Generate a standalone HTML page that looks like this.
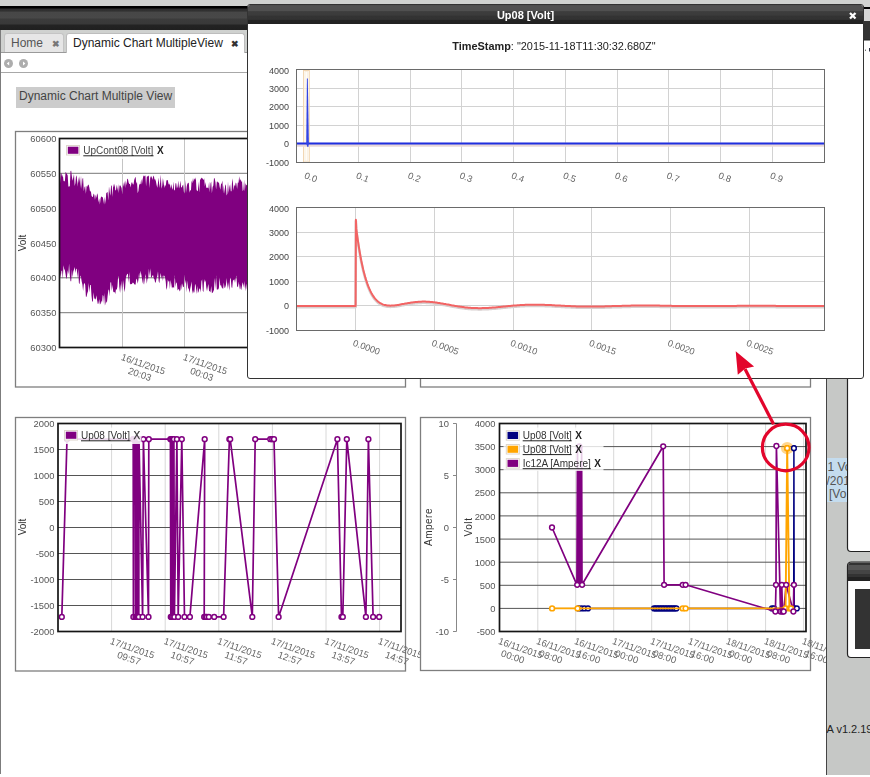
<!DOCTYPE html>
<html><head><meta charset="utf-8"><title>Dynamic Chart MultipleView</title>
<style>
html,body{margin:0;padding:0;background:#fff;}
body{width:870px;height:777px;overflow:hidden;position:relative;font-family:"Liberation Sans",sans-serif;}
.abs{position:absolute;}
#topstrip{left:0;top:0;width:870px;height:7px;background:#d0d2d0;}
#hdr{left:0;top:6px;width:870px;height:24px;background:linear-gradient(#000 0,#000 2.2px,#2e2e2e 2.8px,#323232 5.2px,#474747 6px,#484848 12px,#3b3b3b 13px,#393939 18px,#232323 19px,#202020 24px);}
#tabbar{left:0;top:30px;width:826px;height:22px;background:#cfd1cf;border-bottom:1px solid #9a9a9a;}
.tab{position:absolute;top:3px;height:19px;font-size:12px;line-height:18px;color:#555;background:#e6e6e6;border:1px solid #c4c4c4;border-bottom:none;border-radius:3px 3px 0 0;box-sizing:border-box;white-space:nowrap;}
.tab.active{background:#fff;color:#222;height:21px;border-color:#bdbdbd;}
.tabx{position:absolute;font-size:8.5px;font-weight:bold;color:#777;}
#toolbar{left:0;top:53px;width:826px;height:19px;background:#fff;border-bottom:1px solid #a8a8a8;}
#title{left:16px;top:87px;width:159px;height:20.5px;background:#ccc;font-size:12px;line-height:18px;color:#444;text-indent:3px;white-space:nowrap;}
#leftedge{left:0;top:30px;width:1.3px;height:744px;background:#7c7c7c;}
#rightgray{left:825.6px;top:30px;width:44.4px;height:745.4px;background:#c6c8c6;border-left:1.5px solid #444;box-sizing:border-box;}
#popup{will-change:transform;left:247px;top:4px;width:617px;height:375px;background:#fff;border:1px solid #333;border-radius:3px;box-sizing:border-box;overflow:hidden;}
#pophdr{left:0;top:0;width:618px;height:19px;background:linear-gradient(#4c4c4c 0,#515151 1px,#505050 5.8px,#3d3d3d 6.6px,#3b3b3b 10.2px,#333 11px,#323232 14.4px,#232323 15.2px,#212121 19px);}
#poptitle{left:0;top:0;width:555px;height:19px;line-height:21.5px;text-align:center;color:#fff;font-weight:bold;font-size:11px;}
#popts{left:0;top:35px;width:612px;text-align:center;font-size:10.9px;color:#222;white-space:nowrap;}
svg{position:absolute;left:0;top:0;}
.gs{will-change:transform;}
</style></head><body>
<div class="abs" id="topstrip"></div>
<div class="abs" id="hdr"></div>
<div class="abs" id="tabbar">
 <div class="tab" style="left:4px;width:60px;"><span style="position:absolute;left:6px;">Home</span><span class="tabx" style="left:46.5px;top:0.5px;">&#10006;</span></div>
 <div class="tab active" style="left:66px;width:179px;"><span style="position:absolute;left:6px;">Dynamic Chart MultipleView</span><span class="tabx" style="left:163.5px;top:0.5px;color:#333;">&#10006;</span></div>
</div>
<div class="abs" id="toolbar"></div>
<div class="abs" id="leftedge"></div>
<div class="abs" id="title">Dynamic Chart Multiple View</div>

<svg class="gs" width="870" height="777" viewBox="0 0 870 777" font-family="Liberation Sans, sans-serif">
<defs><clipPath id="clipmain"><rect x="0" y="0" width="826" height="777"/></clipPath></defs>
<circle cx="8.5" cy="63.5" r="4.5" fill="#adadad"/><path d="M9.2 61.6 L6.8 63.5 L9.2 65.4 Z" fill="#fff"/>
<circle cx="23.5" cy="63.5" r="4.5" fill="#adadad"/><path d="M23 61.6 L25.4 63.5 L23 65.4 Z" fill="#fff"/>
<rect x="15.5" y="131.5" width="390" height="255.5" fill="#fff" stroke="#7e7e7e" stroke-width="1.3"/><line x1="59.5" y1="138.5" x2="400" y2="138.5" stroke="#777" stroke-width="1"/><line x1="59.5" y1="173.3" x2="400" y2="173.3" stroke="#777" stroke-width="1"/><line x1="59.5" y1="208.2" x2="400" y2="208.2" stroke="#777" stroke-width="1"/><line x1="59.5" y1="243" x2="400" y2="243" stroke="#777" stroke-width="1"/><line x1="59.5" y1="277.8" x2="400" y2="277.8" stroke="#777" stroke-width="1"/><line x1="59.5" y1="312.7" x2="400" y2="312.7" stroke="#777" stroke-width="1"/><line x1="59.5" y1="347.5" x2="400" y2="347.5" stroke="#777" stroke-width="1"/><line x1="122.5" y1="138.5" x2="122.5" y2="347.5" stroke="#c4c4c4" stroke-width="1"/><line x1="184.5" y1="138.5" x2="184.5" y2="347.5" stroke="#c4c4c4" stroke-width="1"/><polygon points="60,183.3 60.7,173.8 61.4,172.9 62.1,177.2 62.8,174.4 63.5,180.7 64.2,181.5 64.9,180.7 65.6,171.8 66.3,173.1 67,173.9 67.7,175.4 68.4,186.8 69.1,186.3 69.8,186.6 70.5,170.9 71.2,170.8 71.9,176.6 72.6,180.8 73.3,177.4 74,174 74.7,186 75.4,182.9 76.1,175.2 76.8,176.9 77.5,186.8 78.2,177 78.9,182.9 79.6,175.9 80.3,188.1 81,175.4 81.7,189.1 82.4,179 83.1,177.7 83.8,191.3 84.5,186.9 85.2,186.3 85.9,193.8 86.6,186 87.3,186.8 88,184.7 88.7,184.7 89.4,187.8 90.1,192 90.8,190.6 91.5,195.5 92.2,196.9 92.9,196.7 93.6,193.4 94.3,194.7 95,200.1 95.7,194.4 96.4,198 97.1,193.3 97.8,194.9 98.5,202.6 99.2,198.4 99.9,204.5 100.6,198.3 101.3,196.2 102,197.2 102.7,197.1 103.4,200.3 104.1,204.6 104.8,196.8 105.5,204.1 106.2,193.3 106.9,192.5 107.6,191.9 108.3,200.5 109,186.2 109.7,192.1 110.4,195.7 111.1,184.9 111.8,186.3 112.5,197.1 113.2,183.8 113.9,187.6 114.6,183.5 115.3,190.5 116,190.1 116.7,184.4 117.4,190.7 118.1,184 118.8,193 119.5,185.8 120.2,185.2 120.9,186.5 121.6,188 122.3,194.4 123,182 123.7,186.7 124.4,181 125.1,188.1 125.8,180.3 126.5,185.5 127.2,178.9 127.9,178.8 128.6,182.5 129.3,183.9 130,184.1 130.7,187.4 131.4,182.7 132.1,182.3 132.8,184.3 133.5,184.6 134.2,180.1 134.9,178 135.6,176.8 136.3,183.8 137,181.8 137.7,193.3 138.4,190.9 139.1,185.2 139.8,183.7 140.5,184.2 141.2,179 141.9,184.4 142.6,179.6 143.3,176.3 144,175.3 144.7,176.6 145.4,175.3 146.1,186.2 146.8,176.8 147.5,176.6 148.2,175.4 148.9,176.2 149.6,187.9 150.3,176 151,178 151.7,175.8 152.4,180 153.1,176.8 153.8,175.6 154.5,179.4 155.2,179.2 155.9,181.2 156.6,185 157.3,187.8 158,182.7 158.7,177.6 159.4,188.1 160.1,182.7 160.8,174.4 161.5,188.8 162.2,185.7 162.9,178 163.6,182.4 164.3,187.9 165,184.6 165.7,186.6 166.4,180.6 167.1,180.1 167.8,180.2 168.5,183.7 169.2,185.1 169.9,183.2 170.6,188.8 171.3,184 172,188 172.7,189.7 173.4,181.6 174.1,190.1 174.8,190.5 175.5,183.3 176.2,183.3 176.9,188.4 177.6,186.4 178.3,180.5 179,188.8 179.7,186 180.4,180.4 181.1,187.5 181.8,187.3 182.5,185.5 183.2,184.5 183.9,191.8 184.6,193.4 185.3,179.7 186,193 186.7,186.4 187.4,183.4 188.1,183.2 188.8,182.4 189.5,192.8 190.2,189.8 190.9,190.9 191.6,180.5 192.3,183.3 193,178 193.7,181.7 194.4,178.3 195.1,179.7 195.8,177.3 196.5,189.6 197.2,191.3 197.9,190.6 198.6,181.5 199.3,192.4 200,180.1 200.7,178.9 201.4,177.4 202.1,178.7 202.8,178.2 203.5,180.2 204.2,178.2 204.9,186.6 205.6,182 206.3,188.1 207,187.4 207.7,187.8 208.4,188.4 209.1,181.5 209.8,192.2 210.5,183.6 211.2,181.6 211.9,193.2 212.6,187.1 213.3,185.6 214,177.9 214.7,178.4 215.4,182.1 216.1,189.6 216.8,181.8 217.5,181.4 218.2,183.1 218.9,182.1 219.6,186.6 220.3,189.8 221,184 221.7,183.4 222.4,180.6 223.1,193.6 223.8,185 224.5,193.7 225.2,184.3 225.9,185.8 226.6,195.4 227.3,193.7 228,181.4 228.7,193 229.4,187.1 230.1,184.2 230.8,191.3 231.5,191.2 232.2,178.2 232.9,182.7 233.6,190.4 234.3,184.6 235,186.4 235.7,182.4 236.4,183.6 237.1,189.1 237.8,182.6 238.5,182.8 239.2,176.3 239.9,180.8 240.6,179 241.3,182.2 242,180.2 242.7,191.3 243.4,189.8 244.1,179.7 244.8,191.5 245.5,183 246.2,185.5 246.9,184.5 247.6,188.4 248.3,182.4 249,179.4 249.7,184.6 249.7,288.1 249,285.4 248.3,291.5 247.6,278.3 246.9,289.8 246.2,283.6 245.5,291.5 244.8,281.1 244.1,288.1 243.4,285.1 242.7,282.3 242,285.4 241.3,290 240.6,288.7 239.9,283.7 239.2,289.8 238.5,281.5 237.8,287.2 237.1,286.6 236.4,275.6 235.7,278.6 235,282.9 234.3,279.2 233.6,280 232.9,280.8 232.2,288.1 231.5,287.2 230.8,279.1 230.1,277.4 229.4,290.7 228.7,286.1 228,281.9 227.3,289.3 226.6,277.7 225.9,285.1 225.2,287.5 224.5,287.9 223.8,282.5 223.1,289.3 222.4,288.1 221.7,287.5 221,284.9 220.3,285.8 219.6,277.2 218.9,288 218.2,289.5 217.5,289.6 216.8,289.4 216.1,275.3 215.4,289 214.7,277.7 214,289.8 213.3,291.4 212.6,292.7 211.9,293.3 211.2,286 210.5,292.6 209.8,291.1 209.1,291.5 208.4,284.1 207.7,287.2 207,291.2 206.3,287.5 205.6,280.2 204.9,282.4 204.2,279.1 203.5,291.9 202.8,291 202.1,279.2 201.4,281.4 200.7,292.4 200,288.6 199.3,288.7 198.6,291.7 197.9,292.9 197.2,286.1 196.5,294.3 195.8,285.7 195.1,283.8 194.4,292.3 193.7,292.7 193,290 192.3,294.1 191.6,281.4 190.9,285.4 190.2,288.7 189.5,293.1 188.8,289.1 188.1,288.1 187.4,280.6 186.7,292.4 186,279.9 185.3,283.8 184.6,274.5 183.9,286.8 183.2,287.3 182.5,283.3 181.8,289.9 181.1,283.6 180.4,290 179.7,291.6 179,289.2 178.3,289.2 177.6,290.5 176.9,283.6 176.2,282.2 175.5,287 174.8,274.9 174.1,287.9 173.4,287.2 172.7,287.1 172,288.4 171.3,284.1 170.6,280.1 169.9,289.3 169.2,281 168.5,281.8 167.8,279.4 167.1,287.5 166.4,290.1 165.7,281.6 165,277.2 164.3,275.8 163.6,275.4 162.9,281.1 162.2,275.4 161.5,278.9 160.8,273.1 160.1,276.8 159.4,283.2 158.7,281.2 158,271.3 157.3,276 156.6,278 155.9,281.8 155.2,283 154.5,279.5 153.8,278.4 153.1,275.3 152.4,275.4 151.7,277.3 151,277.7 150.3,268.3 149.6,276.8 148.9,268.6 148.2,278.6 147.5,278.5 146.8,283.7 146.1,277.4 145.4,274 144.7,284.7 144,276.3 143.3,284.4 142.6,282.3 141.9,277.9 141.2,274.1 140.5,270.7 139.8,278.6 139.1,272.6 138.4,280.1 137.7,283.7 137,279.7 136.3,278.6 135.6,284.5 134.9,284.7 134.2,283.9 133.5,282.9 132.8,282.5 132.1,283.8 131.4,284.3 130.7,283.7 130,284.8 129.3,272.1 128.6,282.8 127.9,273.8 127.2,274.1 126.5,275.4 125.8,278.3 125.1,288.3 124.4,292.3 123.7,284.4 123,280.1 122.3,291.3 121.6,280.5 120.9,293.2 120.2,284 119.5,292.6 118.8,276.8 118.1,276.8 117.4,286.8 116.7,289.9 116,289 115.3,293.9 114.6,292.1 113.9,292.3 113.2,291.6 112.5,284.8 111.8,290.9 111.1,282.2 110.4,282.4 109.7,296.6 109,289.3 108.3,290.4 107.6,295.9 106.9,303.1 106.2,301.3 105.5,305.6 104.8,293 104.1,305.7 103.4,296.1 102.7,295.1 102,303.1 101.3,300.6 100.6,303.7 99.9,304.6 99.2,298.9 98.5,303.4 97.8,304.1 97.1,299.9 96.4,295.2 95.7,299.7 95,298.5 94.3,298.7 93.6,292.2 92.9,301.2 92.2,301.7 91.5,295.8 90.8,285.1 90.1,284.9 89.4,292.5 88.7,283 88,291.3 87.3,293.3 86.6,296.7 85.9,296.7 85.2,285.1 84.5,282.8 83.8,284.5 83.1,291.1 82.4,284.5 81.7,281.6 81,277.1 80.3,275.4 79.6,284.2 78.9,283 78.2,269 77.5,278.3 76.8,269.2 76.1,268.4 75.4,272.9 74.7,266.9 74,269.5 73.3,271.4 72.6,277.4 71.9,269.6 71.2,281.3 70.5,281.3 69.8,274.9 69.1,263.4 68.4,274.2 67.7,270.2 67,276.7 66.3,279.2 65.6,274.2 64.9,270.3 64.2,269.1 63.5,265.3 62.8,279.1 62.1,270.6 61.4,270.9 60.7,278 60,272.8" fill="#800080"/><rect x="59.5" y="138.5" width="340.5" height="209" fill="none" stroke="#151515" stroke-width="1.7"/><text x="56.4" y="142.1" font-size="9.4" fill="#555" text-anchor="end">60600</text><text x="56.4" y="176.9" font-size="9.4" fill="#555" text-anchor="end">60550</text><text x="56.4" y="211.8" font-size="9.4" fill="#555" text-anchor="end">60500</text><text x="56.4" y="246.6" font-size="9.4" fill="#555" text-anchor="end">60450</text><text x="56.4" y="281.4" font-size="9.4" fill="#555" text-anchor="end">60400</text><text x="56.4" y="316.3" font-size="9.4" fill="#555" text-anchor="end">60350</text><text x="56.4" y="351.1" font-size="9.4" fill="#555" text-anchor="end">60300</text><text transform="translate(26,243) rotate(-90)" font-size="10" fill="#333" text-anchor="middle">Volt</text><rect x="62" y="142" width="110" height="17" fill="#fff" fill-opacity="0.85"/><rect x="66.5" y="145.5" width="13" height="9.5" fill="#fff" stroke="#ddd6cc" stroke-width="1"/><rect x="67.8" y="146.7" width="10.6" height="7.1" fill="#800080"/><text x="83.3" y="154.3" font-size="10" fill="#444">UpCont08 [Volt]</text><line x1="83.3" y1="155.8" x2="153.5" y2="155.8" stroke="#222" stroke-width="1"/><text x="157" y="154.3" font-size="10" font-weight="bold" fill="#222">X</text><g transform="translate(120.5,359.8) rotate(19)" font-size="9.6" fill="#666"><text x="0" y="0" textLength="46" lengthAdjust="spacingAndGlyphs">16/11/2015</text><text x="23" y="10.7" text-anchor="middle">20:03</text></g><g transform="translate(182.5,359.8) rotate(19)" font-size="9.6" fill="#666"><text x="0" y="0" textLength="46" lengthAdjust="spacingAndGlyphs">17/11/2015</text><text x="23" y="10.7" text-anchor="middle">00:03</text></g>
<rect x="420.5" y="131.5" width="390" height="255.5" fill="#fff" stroke="#7e7e7e" stroke-width="1.3"/>
<rect x="15.5" y="417.5" width="390" height="253.5" fill="#fff" stroke="#7e7e7e" stroke-width="1.3"/><line x1="111.6" y1="423.5" x2="111.6" y2="631.5" stroke="#d8d8d8" stroke-width="1"/><line x1="165.2" y1="423.5" x2="165.2" y2="631.5" stroke="#d8d8d8" stroke-width="1"/><line x1="218.8" y1="423.5" x2="218.8" y2="631.5" stroke="#d8d8d8" stroke-width="1"/><line x1="272.4" y1="423.5" x2="272.4" y2="631.5" stroke="#d8d8d8" stroke-width="1"/><line x1="326" y1="423.5" x2="326" y2="631.5" stroke="#d8d8d8" stroke-width="1"/><line x1="379.6" y1="423.5" x2="379.6" y2="631.5" stroke="#d8d8d8" stroke-width="1"/><line x1="58" y1="423.5" x2="401" y2="423.5" stroke="#555" stroke-width="1"/><line x1="58" y1="449.5" x2="401" y2="449.5" stroke="#555" stroke-width="1"/><line x1="58" y1="475.5" x2="401" y2="475.5" stroke="#555" stroke-width="1"/><line x1="58" y1="501.5" x2="401" y2="501.5" stroke="#555" stroke-width="1"/><line x1="58" y1="527.5" x2="401" y2="527.5" stroke="#555" stroke-width="1"/><line x1="58" y1="553.5" x2="401" y2="553.5" stroke="#555" stroke-width="1"/><line x1="58" y1="579.5" x2="401" y2="579.5" stroke="#555" stroke-width="1"/><line x1="58" y1="605.5" x2="401" y2="605.5" stroke="#555" stroke-width="1"/><line x1="58" y1="631.5" x2="401" y2="631.5" stroke="#555" stroke-width="1"/><polyline points="61.8,616.9 67,439.2 133.2,439.2 133.4,616.9 133.7,439.2 135.2,439.2 135.5,616.9 136.1,439.2 136.7,616.9 137.2,439.2 137.8,616.9 138.4,439.2 138.8,616.9 139,439.2 142.6,616.9 143.4,439.2 148.5,616.9 148.8,439.2 170.4,439.2 170.8,616.9 171.4,439.2 172.1,616.9 172.7,439.2 173.3,616.9 173.9,439.2 174.4,616.9 176.9,439.2 178.2,616.9 181.8,439.2 184.5,616.9 189.9,616.9 204.7,439.2 204.2,616.9 205.5,616.9 206.8,616.9 208.8,616.9 214.2,616.9 223.6,616.9 229.4,439.2 230.2,439.2 252.3,616.9 255.2,439.2 270.3,439.2 272.2,439.2 274,439.2 278.6,616.9 337.4,439.2 341.5,616.9 342.8,616.9 346.8,439.2 365.9,616.9 368.4,439.2 373.1,616.9 379.2,616.9" fill="none" stroke="#800080" stroke-width="1.7" stroke-linejoin="round" /><circle cx="61.8" cy="616.9" r="2.4" fill="#fff" stroke="#800080" stroke-width="1.5"/><circle cx="67" cy="439.2" r="2.4" fill="#fff" stroke="#800080" stroke-width="1.5"/><circle cx="133.2" cy="439.2" r="2.4" fill="#fff" stroke="#800080" stroke-width="1.5"/><circle cx="133.4" cy="616.9" r="2.4" fill="#fff" stroke="#800080" stroke-width="1.5"/><circle cx="133.7" cy="439.2" r="2.4" fill="#fff" stroke="#800080" stroke-width="1.5"/><circle cx="135.2" cy="439.2" r="2.4" fill="#fff" stroke="#800080" stroke-width="1.5"/><circle cx="135.5" cy="616.9" r="2.4" fill="#fff" stroke="#800080" stroke-width="1.5"/><circle cx="136.1" cy="439.2" r="2.4" fill="#fff" stroke="#800080" stroke-width="1.5"/><circle cx="136.7" cy="616.9" r="2.4" fill="#fff" stroke="#800080" stroke-width="1.5"/><circle cx="137.2" cy="439.2" r="2.4" fill="#fff" stroke="#800080" stroke-width="1.5"/><circle cx="137.8" cy="616.9" r="2.4" fill="#fff" stroke="#800080" stroke-width="1.5"/><circle cx="138.4" cy="439.2" r="2.4" fill="#fff" stroke="#800080" stroke-width="1.5"/><circle cx="138.8" cy="616.9" r="2.4" fill="#fff" stroke="#800080" stroke-width="1.5"/><circle cx="139" cy="439.2" r="2.4" fill="#fff" stroke="#800080" stroke-width="1.5"/><circle cx="142.6" cy="616.9" r="2.4" fill="#fff" stroke="#800080" stroke-width="1.5"/><circle cx="143.4" cy="439.2" r="2.4" fill="#fff" stroke="#800080" stroke-width="1.5"/><circle cx="148.5" cy="616.9" r="2.4" fill="#fff" stroke="#800080" stroke-width="1.5"/><circle cx="148.8" cy="439.2" r="2.4" fill="#fff" stroke="#800080" stroke-width="1.5"/><circle cx="170.4" cy="439.2" r="2.4" fill="#fff" stroke="#800080" stroke-width="1.5"/><circle cx="170.8" cy="616.9" r="2.4" fill="#fff" stroke="#800080" stroke-width="1.5"/><circle cx="171.4" cy="439.2" r="2.4" fill="#fff" stroke="#800080" stroke-width="1.5"/><circle cx="172.1" cy="616.9" r="2.4" fill="#fff" stroke="#800080" stroke-width="1.5"/><circle cx="172.7" cy="439.2" r="2.4" fill="#fff" stroke="#800080" stroke-width="1.5"/><circle cx="173.3" cy="616.9" r="2.4" fill="#fff" stroke="#800080" stroke-width="1.5"/><circle cx="173.9" cy="439.2" r="2.4" fill="#fff" stroke="#800080" stroke-width="1.5"/><circle cx="174.4" cy="616.9" r="2.4" fill="#fff" stroke="#800080" stroke-width="1.5"/><circle cx="176.9" cy="439.2" r="2.4" fill="#fff" stroke="#800080" stroke-width="1.5"/><circle cx="178.2" cy="616.9" r="2.4" fill="#fff" stroke="#800080" stroke-width="1.5"/><circle cx="181.8" cy="439.2" r="2.4" fill="#fff" stroke="#800080" stroke-width="1.5"/><circle cx="184.5" cy="616.9" r="2.4" fill="#fff" stroke="#800080" stroke-width="1.5"/><circle cx="189.9" cy="616.9" r="2.4" fill="#fff" stroke="#800080" stroke-width="1.5"/><circle cx="204.7" cy="439.2" r="2.4" fill="#fff" stroke="#800080" stroke-width="1.5"/><circle cx="204.2" cy="616.9" r="2.4" fill="#fff" stroke="#800080" stroke-width="1.5"/><circle cx="205.5" cy="616.9" r="2.4" fill="#fff" stroke="#800080" stroke-width="1.5"/><circle cx="206.8" cy="616.9" r="2.4" fill="#fff" stroke="#800080" stroke-width="1.5"/><circle cx="208.8" cy="616.9" r="2.4" fill="#fff" stroke="#800080" stroke-width="1.5"/><circle cx="214.2" cy="616.9" r="2.4" fill="#fff" stroke="#800080" stroke-width="1.5"/><circle cx="223.6" cy="616.9" r="2.4" fill="#fff" stroke="#800080" stroke-width="1.5"/><circle cx="229.4" cy="439.2" r="2.4" fill="#fff" stroke="#800080" stroke-width="1.5"/><circle cx="230.2" cy="439.2" r="2.4" fill="#fff" stroke="#800080" stroke-width="1.5"/><circle cx="252.3" cy="616.9" r="2.4" fill="#fff" stroke="#800080" stroke-width="1.5"/><circle cx="255.2" cy="439.2" r="2.4" fill="#fff" stroke="#800080" stroke-width="1.5"/><circle cx="270.3" cy="439.2" r="2.4" fill="#fff" stroke="#800080" stroke-width="1.5"/><circle cx="272.2" cy="439.2" r="2.4" fill="#fff" stroke="#800080" stroke-width="1.5"/><circle cx="274" cy="439.2" r="2.4" fill="#fff" stroke="#800080" stroke-width="1.5"/><circle cx="278.6" cy="616.9" r="2.4" fill="#fff" stroke="#800080" stroke-width="1.5"/><circle cx="337.4" cy="439.2" r="2.4" fill="#fff" stroke="#800080" stroke-width="1.5"/><circle cx="341.5" cy="616.9" r="2.4" fill="#fff" stroke="#800080" stroke-width="1.5"/><circle cx="342.8" cy="616.9" r="2.4" fill="#fff" stroke="#800080" stroke-width="1.5"/><circle cx="346.8" cy="439.2" r="2.4" fill="#fff" stroke="#800080" stroke-width="1.5"/><circle cx="365.9" cy="616.9" r="2.4" fill="#fff" stroke="#800080" stroke-width="1.5"/><circle cx="368.4" cy="439.2" r="2.4" fill="#fff" stroke="#800080" stroke-width="1.5"/><circle cx="373.1" cy="616.9" r="2.4" fill="#fff" stroke="#800080" stroke-width="1.5"/><circle cx="379.2" cy="616.9" r="2.4" fill="#fff" stroke="#800080" stroke-width="1.5"/><rect x="58" y="423.5" width="343" height="208.0" fill="none" stroke="#151515" stroke-width="1.7"/><text x="54.4" y="427.1" font-size="9.4" fill="#555" text-anchor="end">2000</text><text x="54.4" y="453.1" font-size="9.4" fill="#555" text-anchor="end">1500</text><text x="54.4" y="479.1" font-size="9.4" fill="#555" text-anchor="end">1000</text><text x="54.4" y="505.1" font-size="9.4" fill="#555" text-anchor="end">500</text><text x="54.4" y="531.1" font-size="9.4" fill="#555" text-anchor="end">0</text><text x="54.4" y="557.1" font-size="9.4" fill="#555" text-anchor="end">-500</text><text x="54.4" y="583.1" font-size="9.4" fill="#555" text-anchor="end">-1000</text><text x="54.4" y="609.1" font-size="9.4" fill="#555" text-anchor="end">-1500</text><text x="54.4" y="635.1" font-size="9.4" fill="#555" text-anchor="end">-2000</text><text transform="translate(26,527) rotate(-90)" font-size="10" fill="#333" text-anchor="middle">Volt</text><rect x="61.5" y="427.5" width="80" height="16.5" fill="#fff" fill-opacity="0.85"/><rect x="64.5" y="430.5" width="13" height="9.5" fill="#fff" stroke="#ddd6cc" stroke-width="1"/><rect x="65.8" y="431.7" width="10.6" height="7.1" fill="#800080"/><text x="81" y="439.3" font-size="10" fill="#333">Up08 [Volt]</text><line x1="81" y1="440.8" x2="130.5" y2="440.8" stroke="#222" stroke-width="1"/><text x="133.5" y="439.3" font-size="10" fill="#333" stroke="#333" stroke-width="0.25">X</text><g transform="translate(109.6,643.8) rotate(19)" font-size="9.6" fill="#666"><text x="0" y="0" textLength="46" lengthAdjust="spacingAndGlyphs">17/11/2015</text><text x="23" y="10.7" text-anchor="middle">09:57</text></g><g transform="translate(163.2,643.8) rotate(19)" font-size="9.6" fill="#666"><text x="0" y="0" textLength="46" lengthAdjust="spacingAndGlyphs">17/11/2015</text><text x="23" y="10.7" text-anchor="middle">10:57</text></g><g transform="translate(216.8,643.8) rotate(19)" font-size="9.6" fill="#666"><text x="0" y="0" textLength="46" lengthAdjust="spacingAndGlyphs">17/11/2015</text><text x="23" y="10.7" text-anchor="middle">11:57</text></g><g transform="translate(270.4,643.8) rotate(19)" font-size="9.6" fill="#666"><text x="0" y="0" textLength="46" lengthAdjust="spacingAndGlyphs">17/11/2015</text><text x="23" y="10.7" text-anchor="middle">12:57</text></g><g transform="translate(324,643.8) rotate(19)" font-size="9.6" fill="#666"><text x="0" y="0" textLength="46" lengthAdjust="spacingAndGlyphs">17/11/2015</text><text x="23" y="10.7" text-anchor="middle">13:57</text></g><g transform="translate(377.6,643.8) rotate(19)" font-size="9.6" fill="#666"><text x="0" y="0" textLength="46" lengthAdjust="spacingAndGlyphs">17/11/2015</text><text x="23" y="10.7" text-anchor="middle">14:57</text></g>
<rect x="420.5" y="417.5" width="390" height="253" fill="#fff" stroke="#7e7e7e" stroke-width="1.3"/><line x1="537.8" y1="423.5" x2="537.8" y2="631.5" stroke="#d8d8d8" stroke-width="1"/><line x1="575.7" y1="423.5" x2="575.7" y2="631.5" stroke="#d8d8d8" stroke-width="1"/><line x1="613.7" y1="423.5" x2="613.7" y2="631.5" stroke="#d8d8d8" stroke-width="1"/><line x1="651.7" y1="423.5" x2="651.7" y2="631.5" stroke="#d8d8d8" stroke-width="1"/><line x1="689.6" y1="423.5" x2="689.6" y2="631.5" stroke="#d8d8d8" stroke-width="1"/><line x1="727.6" y1="423.5" x2="727.6" y2="631.5" stroke="#d8d8d8" stroke-width="1"/><line x1="765.6" y1="423.5" x2="765.6" y2="631.5" stroke="#d8d8d8" stroke-width="1"/><line x1="803.6" y1="423.5" x2="803.6" y2="631.5" stroke="#d8d8d8" stroke-width="1"/><line x1="499.5" y1="423.5" x2="806" y2="423.5" stroke="#555" stroke-width="1"/><line x1="499.5" y1="446.6" x2="806" y2="446.6" stroke="#555" stroke-width="1"/><line x1="499.5" y1="469.7" x2="806" y2="469.7" stroke="#555" stroke-width="1"/><line x1="499.5" y1="492.8" x2="806" y2="492.8" stroke="#555" stroke-width="1"/><line x1="499.5" y1="515.9" x2="806" y2="515.9" stroke="#555" stroke-width="1"/><line x1="499.5" y1="539.1" x2="806" y2="539.1" stroke="#555" stroke-width="1"/><line x1="499.5" y1="562.2" x2="806" y2="562.2" stroke="#555" stroke-width="1"/><line x1="499.5" y1="585.3" x2="806" y2="585.3" stroke="#555" stroke-width="1"/><line x1="499.5" y1="608.4" x2="806" y2="608.4" stroke="#555" stroke-width="1"/><line x1="499.5" y1="631.5" x2="806" y2="631.5" stroke="#555" stroke-width="1"/><polyline points="578.6,608.4 581.5,608.4 584.5,608.4 588,608.4 654,608.4 655.6,608.4 657.2,608.4 658.8,608.4 660.4,608.4 662,608.4 663.6,608.4 665.2,608.4 666.8,608.4 668.4,608.4 670,608.4 671.6,608.4 673.2,608.4 674.8,608.4 676.4,608.4 772,608.4 774,608.4 793.7,608.4 793.9,448.2 794.2,608.4 796.8,608.4" fill="none" stroke="#000080" stroke-width="1.5" stroke-linejoin="round" /><circle cx="578.6" cy="608.4" r="2.4" fill="#fff" stroke="#000080" stroke-width="1.4"/><circle cx="581.5" cy="608.4" r="2.4" fill="#fff" stroke="#000080" stroke-width="1.4"/><circle cx="584.5" cy="608.4" r="2.4" fill="#fff" stroke="#000080" stroke-width="1.4"/><circle cx="588" cy="608.4" r="2.4" fill="#fff" stroke="#000080" stroke-width="1.4"/><circle cx="654" cy="608.4" r="2.4" fill="#fff" stroke="#000080" stroke-width="1.4"/><circle cx="655.6" cy="608.4" r="2.4" fill="#fff" stroke="#000080" stroke-width="1.4"/><circle cx="657.2" cy="608.4" r="2.4" fill="#fff" stroke="#000080" stroke-width="1.4"/><circle cx="658.8" cy="608.4" r="2.4" fill="#fff" stroke="#000080" stroke-width="1.4"/><circle cx="660.4" cy="608.4" r="2.4" fill="#fff" stroke="#000080" stroke-width="1.4"/><circle cx="662" cy="608.4" r="2.4" fill="#fff" stroke="#000080" stroke-width="1.4"/><circle cx="663.6" cy="608.4" r="2.4" fill="#fff" stroke="#000080" stroke-width="1.4"/><circle cx="665.2" cy="608.4" r="2.4" fill="#fff" stroke="#000080" stroke-width="1.4"/><circle cx="666.8" cy="608.4" r="2.4" fill="#fff" stroke="#000080" stroke-width="1.4"/><circle cx="668.4" cy="608.4" r="2.4" fill="#fff" stroke="#000080" stroke-width="1.4"/><circle cx="670" cy="608.4" r="2.4" fill="#fff" stroke="#000080" stroke-width="1.4"/><circle cx="671.6" cy="608.4" r="2.4" fill="#fff" stroke="#000080" stroke-width="1.4"/><circle cx="673.2" cy="608.4" r="2.4" fill="#fff" stroke="#000080" stroke-width="1.4"/><circle cx="674.8" cy="608.4" r="2.4" fill="#fff" stroke="#000080" stroke-width="1.4"/><circle cx="676.4" cy="608.4" r="2.4" fill="#fff" stroke="#000080" stroke-width="1.4"/><circle cx="772" cy="608.4" r="2.4" fill="#fff" stroke="#000080" stroke-width="1.4"/><circle cx="774" cy="608.4" r="2.4" fill="#fff" stroke="#000080" stroke-width="1.4"/><circle cx="793.7" cy="608.4" r="2.4" fill="#fff" stroke="#000080" stroke-width="1.4"/><circle cx="793.9" cy="448.2" r="2.4" fill="#fff" stroke="#000080" stroke-width="1.4"/><circle cx="794.2" cy="608.4" r="2.4" fill="#fff" stroke="#000080" stroke-width="1.4"/><circle cx="796.8" cy="608.4" r="2.4" fill="#fff" stroke="#000080" stroke-width="1.4"/><polyline points="552,527.5 576.9,584.8 577.5,446.3 578,584.8 578.7,469.7 579.3,584.8 579.9,469.7 580.5,584.8 581,469.7 581.4,584.8 581.6,446.3 582,584.8 663.2,446.3 664.1,584.8 682.7,584.8 685.6,584.8 775.4,611.5 776,584.8 776.4,446 780.5,611.5 781.8,584.8 782.5,611.5 783.7,611.5 786.2,584.8 793.4,611.5 793.9,584.8" fill="none" stroke="#800080" stroke-width="1.7" stroke-linejoin="round" /><polyline points="552.1,608.4 577.6,608.4 682.7,608.4 685.6,608.4 785.6,608.4 787.2,448.2 789.4,608.4 791,608.4" fill="none" stroke="#ffa500" stroke-width="1.9" stroke-linejoin="round" /><circle cx="552.1" cy="608.4" r="2.4" fill="#fff" stroke="#ffa500" stroke-width="1.6"/><circle cx="577.6" cy="608.4" r="2.4" fill="#fff" stroke="#ffa500" stroke-width="1.6"/><circle cx="682.7" cy="608.4" r="2.4" fill="#fff" stroke="#ffa500" stroke-width="1.6"/><circle cx="685.6" cy="608.4" r="2.4" fill="#fff" stroke="#ffa500" stroke-width="1.6"/><circle cx="785.6" cy="608.4" r="2.4" fill="#fff" stroke="#ffa500" stroke-width="1.6"/><circle cx="787.2" cy="448.2" r="2.4" fill="#fff" stroke="#ffa500" stroke-width="1.6"/><circle cx="789.4" cy="608.4" r="2.4" fill="#fff" stroke="#ffa500" stroke-width="1.6"/><circle cx="791" cy="608.4" r="2.4" fill="#fff" stroke="#ffa500" stroke-width="1.6"/><circle cx="552" cy="527.5" r="2.4" fill="#fff" stroke="#800080" stroke-width="1.5"/><circle cx="577.2" cy="584.8" r="2.4" fill="#fff" stroke="#800080" stroke-width="1.5"/><circle cx="582.1" cy="584.8" r="2.4" fill="#fff" stroke="#800080" stroke-width="1.5"/><circle cx="579.3" cy="446.3" r="2.4" fill="#fff" stroke="#800080" stroke-width="1.5"/><circle cx="663.2" cy="446.3" r="2.4" fill="#fff" stroke="#800080" stroke-width="1.5"/><circle cx="664.1" cy="584.8" r="2.4" fill="#fff" stroke="#800080" stroke-width="1.5"/><circle cx="682.7" cy="584.8" r="2.4" fill="#fff" stroke="#800080" stroke-width="1.5"/><circle cx="685.6" cy="584.8" r="2.4" fill="#fff" stroke="#800080" stroke-width="1.5"/><circle cx="775.4" cy="611.5" r="2.4" fill="#fff" stroke="#800080" stroke-width="1.5"/><circle cx="776" cy="584.8" r="2.4" fill="#fff" stroke="#800080" stroke-width="1.5"/><circle cx="776.4" cy="446" r="2.4" fill="#fff" stroke="#800080" stroke-width="1.5"/><circle cx="780.5" cy="611.5" r="2.4" fill="#fff" stroke="#800080" stroke-width="1.5"/><circle cx="781.8" cy="584.8" r="2.4" fill="#fff" stroke="#800080" stroke-width="1.5"/><circle cx="782.5" cy="611.5" r="2.4" fill="#fff" stroke="#800080" stroke-width="1.5"/><circle cx="783.7" cy="611.5" r="2.4" fill="#fff" stroke="#800080" stroke-width="1.5"/><circle cx="786.2" cy="584.8" r="2.4" fill="#fff" stroke="#800080" stroke-width="1.5"/><circle cx="793.4" cy="611.5" r="2.4" fill="#fff" stroke="#800080" stroke-width="1.5"/><circle cx="793.9" cy="584.8" r="2.4" fill="#fff" stroke="#800080" stroke-width="1.5"/><circle cx="787.2" cy="448.2" r="6.2" fill="#ffa500" fill-opacity="0.45"/><circle cx="787.2" cy="448.2" r="2.4" fill="#fff" stroke="#ffa500" stroke-width="1.6"/><circle cx="793.9" cy="448.2" r="2.3" fill="#fff" stroke="#000080" stroke-width="1.3"/><rect x="499.5" y="423.5" width="306.5" height="208.0" fill="none" stroke="#151515" stroke-width="1.7"/><text x="495.5" y="427.1" font-size="9.4" fill="#555" text-anchor="end">4000</text><text x="495.5" y="450.2" font-size="9.4" fill="#555" text-anchor="end">3500</text><text x="495.5" y="473.3" font-size="9.4" fill="#555" text-anchor="end">3000</text><text x="495.5" y="496.4" font-size="9.4" fill="#555" text-anchor="end">2500</text><text x="495.5" y="519.5" font-size="9.4" fill="#555" text-anchor="end">2000</text><text x="495.5" y="542.7" font-size="9.4" fill="#555" text-anchor="end">1500</text><text x="495.5" y="565.8" font-size="9.4" fill="#555" text-anchor="end">1000</text><text x="495.5" y="588.9" font-size="9.4" fill="#555" text-anchor="end">500</text><text x="495.5" y="612" font-size="9.4" fill="#555" text-anchor="end">0</text><text x="495.5" y="635.1" font-size="9.4" fill="#555" text-anchor="end">-500</text><text transform="translate(471.5,527) rotate(-90)" font-size="10" fill="#333" text-anchor="middle" letter-spacing="0.6">Volt</text><line x1="456.5" y1="423.5" x2="456.5" y2="631.5" stroke="#888" stroke-width="1"/><line x1="453" y1="423.5" x2="456.5" y2="423.5" stroke="#888" stroke-width="1"/><text x="449" y="427.1" font-size="9.4" fill="#555" text-anchor="end">10</text><line x1="453" y1="475.5" x2="456.5" y2="475.5" stroke="#888" stroke-width="1"/><text x="449" y="479.1" font-size="9.4" fill="#555" text-anchor="end">5</text><line x1="453" y1="527.5" x2="456.5" y2="527.5" stroke="#888" stroke-width="1"/><text x="449" y="531.1" font-size="9.4" fill="#555" text-anchor="end">0</text><line x1="453" y1="579.5" x2="456.5" y2="579.5" stroke="#888" stroke-width="1"/><text x="449" y="583.1" font-size="9.4" fill="#555" text-anchor="end">-5</text><line x1="453" y1="631.5" x2="456.5" y2="631.5" stroke="#888" stroke-width="1"/><text x="449" y="635.1" font-size="9.4" fill="#555" text-anchor="end">-10</text><text transform="translate(431.5,527) rotate(-90)" font-size="10" fill="#333" text-anchor="middle" letter-spacing="0.5">Ampere</text><rect x="503.5" y="427.5" width="100" height="43.5" fill="#fff" fill-opacity="0.8"/><rect x="506.3" y="430.7" width="13" height="9.5" fill="#fff" stroke="#ddd6cc" stroke-width="1"/><rect x="507.5" y="431.9" width="10.6" height="7.1" fill="#000080"/><text x="522.7" y="439.3" font-size="10" fill="#333" textLength="49">Up08 [Volt]</text><line x1="522.7" y1="440.8" x2="571.7" y2="440.8" stroke="#222" stroke-width="1"/><text x="575.2" y="439.3" font-size="10" font-weight="bold" fill="#222">X</text><rect x="506.3" y="444.5" width="13" height="9.5" fill="#fff" stroke="#ddd6cc" stroke-width="1"/><rect x="507.5" y="445.7" width="10.6" height="7.1" fill="#ffa500"/><text x="522.7" y="453.1" font-size="10" fill="#333" textLength="49">Up08 [Volt]</text><line x1="522.7" y1="454.6" x2="571.7" y2="454.6" stroke="#222" stroke-width="1"/><text x="575.2" y="453.1" font-size="10" font-weight="bold" fill="#222">X</text><rect x="506.3" y="458.6" width="13" height="9.5" fill="#fff" stroke="#ddd6cc" stroke-width="1"/><rect x="507.5" y="459.8" width="10.6" height="7.1" fill="#800080"/><text x="522.7" y="467.2" font-size="10" fill="#333" textLength="68.1">Ic12A [Ampere]</text><line x1="522.7" y1="468.7" x2="590.8" y2="468.7" stroke="#222" stroke-width="1"/><text x="594.3" y="467.2" font-size="10" font-weight="bold" fill="#222">X</text><g clip-path="url(#clipmain)"><g transform="translate(497.8,643.8) rotate(19)" font-size="9.6" fill="#666"><text x="0" y="0" textLength="46" lengthAdjust="spacingAndGlyphs">16/11/2015</text><text x="18.4" y="10.7" text-anchor="middle">00:00</text></g><g transform="translate(535.8,643.8) rotate(19)" font-size="9.6" fill="#666"><text x="0" y="0" textLength="46" lengthAdjust="spacingAndGlyphs">16/11/2015</text><text x="18.4" y="10.7" text-anchor="middle">08:00</text></g><g transform="translate(573.7,643.8) rotate(19)" font-size="9.6" fill="#666"><text x="0" y="0" textLength="46" lengthAdjust="spacingAndGlyphs">16/11/2015</text><text x="18.4" y="10.7" text-anchor="middle">16:00</text></g><g transform="translate(611.7,643.8) rotate(19)" font-size="9.6" fill="#666"><text x="0" y="0" textLength="46" lengthAdjust="spacingAndGlyphs">17/11/2015</text><text x="18.4" y="10.7" text-anchor="middle">00:00</text></g><g transform="translate(649.7,643.8) rotate(19)" font-size="9.6" fill="#666"><text x="0" y="0" textLength="46" lengthAdjust="spacingAndGlyphs">17/11/2015</text><text x="18.4" y="10.7" text-anchor="middle">08:00</text></g><g transform="translate(687.6,643.8) rotate(19)" font-size="9.6" fill="#666"><text x="0" y="0" textLength="46" lengthAdjust="spacingAndGlyphs">17/11/2015</text><text x="18.4" y="10.7" text-anchor="middle">16:00</text></g><g transform="translate(725.6,643.8) rotate(19)" font-size="9.6" fill="#666"><text x="0" y="0" textLength="46" lengthAdjust="spacingAndGlyphs">18/11/2015</text><text x="18.4" y="10.7" text-anchor="middle">00:00</text></g><g transform="translate(763.6,643.8) rotate(19)" font-size="9.6" fill="#666"><text x="0" y="0" textLength="46" lengthAdjust="spacingAndGlyphs">18/11/2015</text><text x="18.4" y="10.7" text-anchor="middle">08:00</text></g><g transform="translate(801.6,643.8) rotate(19)" font-size="9.6" fill="#666"><text x="0" y="0" textLength="46" lengthAdjust="spacingAndGlyphs">18/11/2015</text><text x="18.4" y="10.7" text-anchor="middle">16:00</text></g></g>
</svg>
<div class="abs" id="rightgray"></div>
<svg width="870" height="777" viewBox="0 0 870 777" font-family="Liberation Sans, sans-serif">
<rect x="864" y="0" width="6" height="7" fill="#d0d2d0"/>
<rect x="864" y="7" width="6" height="2" fill="#000"/>
<rect x="864" y="9" width="6" height="12" fill="#d6d6d6"/>
<rect x="864" y="21" width="6" height="19" fill="#333"/>
<path d="M847.5 40 V548 Q847.5 551.5 851 551.5 H871 V40 Z" fill="#fff" stroke="#222" stroke-width="1.2"/>
<rect x="869" y="48" width="1" height="3.5" fill="#334"/>
<rect x="865" y="49.7" width="1" height="1" fill="#333"/>
<rect x="827" y="458" width="20" height="44" fill="#c4dcee"/>
<g clip-path="url(#c2)" font-size="12" fill="#555"><text x="827.5" y="471">1 Vo</text><text x="826.5" y="485">/201</text><text x="829" y="498">[Vo</text></g>
<defs><clipPath id="c2"><rect x="827" y="458" width="20" height="44"/></clipPath></defs>
<path d="M847.5 566 Q847.5 562 851.5 562 H871 V657.5 H851 Q847.5 657.5 847.5 654 Z" fill="#fff" stroke="#222" stroke-width="1.2"/>
<path d="M848 566 Q848 562.5 851.5 562.5 H871 V581 H848 Z" fill="#333"/>
<rect x="848" y="565" width="23" height="5" fill="#555"/><rect x="848" y="570" width="23" height="4" fill="#444"/><rect x="848" y="577" width="23" height="4" fill="#222"/>
<rect x="855" y="589" width="16" height="60" fill="#333"/>
<text x="826.6" y="733" font-size="11" fill="#222">A v1.2.19</text>
</svg>
<div class="abs" id="popup"><div class="abs" id="pophdr"></div><div class="abs" id="poptitle">Up08 [Volt]</div>
<div class="abs" id="popts"><b>TimeStamp</b>: "2015-11-18T11:30:32.680Z"</div></div>
<svg class="gs" width="870" height="777" viewBox="0 0 870 777" font-family="Liberation Sans, sans-serif">
<path d="M850 13 L855.5 18.5 M855.5 13 L850 18.5" stroke="#fff" stroke-width="2.3" stroke-linecap="butt"/>
<rect x="296.5" y="69.5" width="528.0" height="93.0" fill="#fff"/><line x1="358.5" y1="69.5" x2="358.5" y2="162.5" stroke="#d2d2d2" stroke-width="1"/><line x1="410.5" y1="69.5" x2="410.5" y2="162.5" stroke="#d2d2d2" stroke-width="1"/><line x1="461.5" y1="69.5" x2="461.5" y2="162.5" stroke="#d2d2d2" stroke-width="1"/><line x1="513.5" y1="69.5" x2="513.5" y2="162.5" stroke="#d2d2d2" stroke-width="1"/><line x1="565.5" y1="69.5" x2="565.5" y2="162.5" stroke="#d2d2d2" stroke-width="1"/><line x1="617.5" y1="69.5" x2="617.5" y2="162.5" stroke="#d2d2d2" stroke-width="1"/><line x1="668.5" y1="69.5" x2="668.5" y2="162.5" stroke="#d2d2d2" stroke-width="1"/><line x1="720.5" y1="69.5" x2="720.5" y2="162.5" stroke="#d2d2d2" stroke-width="1"/><line x1="772.5" y1="69.5" x2="772.5" y2="162.5" stroke="#d2d2d2" stroke-width="1"/><line x1="296.5" y1="88.5" x2="824.5" y2="88.5" stroke="#d2d2d2" stroke-width="1"/><line x1="296.5" y1="106.5" x2="824.5" y2="106.5" stroke="#d2d2d2" stroke-width="1"/><line x1="296.5" y1="125.5" x2="824.5" y2="125.5" stroke="#d2d2d2" stroke-width="1"/><line x1="296.5" y1="143.5" x2="824.5" y2="143.5" stroke="#d2d2d2" stroke-width="1"/><rect x="303.5" y="70.5" width="5.8" height="91.5" fill="#fffaf2" fill-opacity="0.6" stroke="#f1d3ad" stroke-width="0.9"/><rect x="305" y="71.5" width="2.8" height="89.5" fill="none" stroke="#f7ead8" stroke-width="0.7"/><line x1="296.5" y1="144.7" x2="824.5" y2="144.7" stroke="#e8d8d8" stroke-width="4"/><line x1="296.5" y1="143.5" x2="824.5" y2="143.5" stroke="#1f2fe0" stroke-width="2.1"/><polygon points="306.2,143.5 306.9,78.6 307.8,78.6 308.9,143.5 308.3,147.1 307.5,147.1" fill="#3344e3"/><rect x="296.5" y="69.5" width="528.0" height="93.0" fill="none" stroke="#6a6a6a" stroke-width="1"/><text x="289" y="74.1" font-size="9" fill="#444" text-anchor="end">4000</text><text x="289" y="91.5" font-size="9" fill="#444" text-anchor="end">3000</text><text x="289" y="110.1" font-size="9" fill="#444" text-anchor="end">2000</text><text x="289" y="128.7" font-size="9" fill="#444" text-anchor="end">1000</text><text x="289" y="147.3" font-size="9" fill="#444" text-anchor="end">0</text><text x="289" y="165.9" font-size="9" fill="#444" text-anchor="end">-1000</text><g transform="translate(303.7,178) rotate(20)" font-size="9.2" fill="#666"><text x="0" y="0" textLength="13" lengthAdjust="spacingAndGlyphs">0.0</text></g><g transform="translate(355.4,178) rotate(20)" font-size="9.2" fill="#666"><text x="0" y="0" textLength="13" lengthAdjust="spacingAndGlyphs">0.1</text></g><g transform="translate(407.2,178) rotate(20)" font-size="9.2" fill="#666"><text x="0" y="0" textLength="13" lengthAdjust="spacingAndGlyphs">0.2</text></g><g transform="translate(458.9,178) rotate(20)" font-size="9.2" fill="#666"><text x="0" y="0" textLength="13" lengthAdjust="spacingAndGlyphs">0.3</text></g><g transform="translate(510.7,178) rotate(20)" font-size="9.2" fill="#666"><text x="0" y="0" textLength="13" lengthAdjust="spacingAndGlyphs">0.4</text></g><g transform="translate(562.5,178) rotate(20)" font-size="9.2" fill="#666"><text x="0" y="0" textLength="13" lengthAdjust="spacingAndGlyphs">0.5</text></g><g transform="translate(614.2,178) rotate(20)" font-size="9.2" fill="#666"><text x="0" y="0" textLength="13" lengthAdjust="spacingAndGlyphs">0.6</text></g><g transform="translate(666,178) rotate(20)" font-size="9.2" fill="#666"><text x="0" y="0" textLength="13" lengthAdjust="spacingAndGlyphs">0.7</text></g><g transform="translate(717.7,178) rotate(20)" font-size="9.2" fill="#666"><text x="0" y="0" textLength="13" lengthAdjust="spacingAndGlyphs">0.8</text></g><g transform="translate(769.5,178) rotate(20)" font-size="9.2" fill="#666"><text x="0" y="0" textLength="13" lengthAdjust="spacingAndGlyphs">0.9</text></g><rect x="296.5" y="207.5" width="528.0" height="123.0" fill="#fff"/><line x1="355.5" y1="207.5" x2="355.5" y2="330.5" stroke="#d2d2d2" stroke-width="1"/><line x1="434.5" y1="207.5" x2="434.5" y2="330.5" stroke="#d2d2d2" stroke-width="1"/><line x1="513.5" y1="207.5" x2="513.5" y2="330.5" stroke="#d2d2d2" stroke-width="1"/><line x1="591.5" y1="207.5" x2="591.5" y2="330.5" stroke="#d2d2d2" stroke-width="1"/><line x1="670.5" y1="207.5" x2="670.5" y2="330.5" stroke="#d2d2d2" stroke-width="1"/><line x1="749.5" y1="207.5" x2="749.5" y2="330.5" stroke="#d2d2d2" stroke-width="1"/><line x1="296.5" y1="232.5" x2="824.5" y2="232.5" stroke="#d2d2d2" stroke-width="1"/><line x1="296.5" y1="256.5" x2="824.5" y2="256.5" stroke="#d2d2d2" stroke-width="1"/><line x1="296.5" y1="281.5" x2="824.5" y2="281.5" stroke="#d2d2d2" stroke-width="1"/><line x1="296.5" y1="305.5" x2="824.5" y2="305.5" stroke="#d2d2d2" stroke-width="1"/><polyline points="296.5,307.1 355.6,307.1 355.9,221 356.3,230.1 357.3,237.7 358.3,244.6 359.3,250.9 360.3,256.7 361.3,262 362.3,266.7 363.3,271.1 364.3,275 365.3,278.6 366.3,281.9 367.3,284.8 368.3,287.5 369.3,289.9 370.3,292.1 371.3,294.1 372.3,295.8 373.3,297.4 374.3,298.8 375.3,300 376.3,301.1 377.3,302.1 378.3,303 379.3,303.7 380.3,304.4 381.3,304.9 382.3,305.4 383.3,305.8 384.3,306.1 385.3,306.3 386.3,306.5 387.3,306.7 388.3,306.8 389.3,306.8 390.3,306.9 391.3,306.8 392.3,306.8 393.3,306.7 394.3,306.6 395.3,306.5 396.3,306.4 397.3,306.2 398.3,306.1 399.3,305.9 400.3,305.7 401.3,305.5 402.3,305.3 403.3,305.1 404.3,305 405.3,304.8 406.3,304.6 407.3,304.4 408.3,304.2 409.3,304.1 410.3,303.9 411.3,303.7 412.3,303.6 413.3,303.5 414.3,303.4 415.3,303.2 416.3,303.1 417.3,303.1 418.3,303 419.3,302.9 420.3,302.9 421.3,302.9 422.3,302.8 423.3,302.8 424.3,302.8 425.3,302.8 426.3,302.9 427.3,302.9 428.3,303 429.3,303 430.3,303.1 431.3,303.2 432.3,303.3 433.3,303.4 434.3,303.5 435.3,303.7 436.3,303.8 437.3,303.9 438.3,304.1 439.3,304.2 440.3,304.4 441.3,304.6 442.3,304.7 443.3,304.9 444.3,305.1 445.3,305.3 446.3,305.5 447.3,305.6 448.3,305.8 449.3,306 450.3,306.2 451.3,306.4 452.3,306.6 453.3,306.7 454.3,306.9 455.3,307.1 456.3,307.3 457.3,307.4 458.3,307.6 459.3,307.7 460.3,307.9 461.3,308 462.3,308.2 463.3,308.3 464.3,308.4 465.3,308.6 466.3,308.7 467.3,308.8 468.3,308.9 469.3,308.9 470.3,309 471.3,309.1 472.3,309.2 473.3,309.2 474.3,309.3 475.3,309.3 476.3,309.3 477.3,309.3 478.3,309.4 479.3,309.4 480.3,309.4 481.3,309.4 482.3,309.3 483.3,309.3 484.3,309.3 485.3,309.2 486.3,309.2 487.3,309.2 488.3,309.1 489.3,309 490.3,309 491.3,308.9 492.3,308.8 493.3,308.7 494.3,308.7 495.3,308.6 496.3,308.5 497.3,308.4 498.3,308.3 499.3,308.2 500.3,308.1 501.3,308 502.3,307.9 503.3,307.8 504.3,307.7 505.3,307.6 506.3,307.5 507.3,307.4 508.3,307.3 509.3,307.2 510.3,307.1 511.3,307 512.3,306.9 513.3,306.8 514.3,306.7 515.3,306.7 516.3,306.6 517.3,306.5 518.3,306.4 519.3,306.4 520.3,306.3 521.3,306.2 522.3,306.2 523.3,306.1 524.3,306.1 525.3,306 526.3,306 527.3,306 528.3,305.9 529.3,305.9 530.3,305.9 531.3,305.9 532.3,305.9 533.3,305.9 534.3,305.9 535.3,305.9 536.3,305.9 537.3,305.9 538.3,305.9 539.3,305.9 540.3,305.9 541.3,305.9 542.3,306 543.3,306 544.3,306 545.3,306.1 546.3,306.1 547.3,306.2 548.3,306.2 549.3,306.2 550.3,306.3 551.3,306.3 552.3,306.4 553.3,306.4 554.3,306.5 555.3,306.6 556.3,306.6 557.3,306.7 558.3,306.7 559.3,306.8 560.3,306.8 561.3,306.9 562.3,306.9 563.3,307 564.3,307 565.3,307.1 566.3,307.2 567.3,307.2 568.3,307.2 569.3,307.3 570.3,307.3 571.3,307.4 572.3,307.4 573.3,307.5 574.3,307.5 575.3,307.5 576.3,307.6 577.3,307.6 578.3,307.6 579.3,307.7 580.3,307.7 581.3,307.7 582.3,307.7 583.3,307.7 584.3,307.8 585.3,307.8 586.3,307.8 587.3,307.8 588.3,307.8 589.3,307.8 590.3,307.8 591.3,307.8 592.3,307.8 593.3,307.8 594.3,307.8 595.3,307.7 596.3,307.7 597.3,307.7 598.3,307.7 599.3,307.7 600.3,307.7 601.3,307.6 602.3,307.6 603.3,307.6 604.3,307.6 605.3,307.5 606.3,307.5 607.3,307.5 608.3,307.5 609.3,307.4 610.3,307.4 611.3,307.4 612.3,307.3 613.3,307.3 614.3,307.3 615.3,307.2 616.3,307.2 617.3,307.2 618.3,307.2 619.3,307.1 620.3,307.1 621.3,307.1 622.3,307 623.3,307 624.3,307 625.3,307 626.3,306.9 627.3,306.9 628.3,306.9 629.3,306.9 630.3,306.9 631.3,306.8 632.3,306.8 633.3,306.8 634.3,306.8 635.3,306.8 636.3,306.8 637.3,306.8 638.3,306.7 639.3,306.7 640.3,306.7 641.3,306.7 642.3,306.7 643.3,306.7 644.3,306.7 645.3,306.7 646.3,306.7 647.3,306.7 648.3,306.7 649.3,306.7 650.3,306.7 651.3,306.8 652.3,306.8 653.3,306.8 654.3,306.8 655.3,306.8 656.3,306.8 657.3,306.8 658.3,306.8 659.3,306.8 660.3,306.9 661.3,306.9 662.3,306.9 663.3,306.9 664.3,306.9 665.3,306.9 666.3,307 667.3,307 668.3,307 669.3,307 670.3,307 671.3,307 672.3,307.1 673.3,307.1 674.3,307.1 675.3,307.1 676.3,307.1 677.3,307.1 678.3,307.1 679.3,307.2 680.3,307.2 681.3,307.2 682.3,307.2 683.3,307.2 684.3,307.2 685.3,307.2 686.3,307.2 687.3,307.3 688.3,307.3 689.3,307.3 690.3,307.3 691.3,307.3 692.3,307.3 693.3,307.3 694.3,307.3 695.3,307.3 696.3,307.3 697.3,307.3 698.3,307.3 699.3,307.3 700.3,307.3 701.3,307.3 702.3,307.3 703.3,307.3 704.3,307.3 705.3,307.3 706.3,307.3 707.3,307.3 708.3,307.3 709.3,307.3 710.3,307.3 711.3,307.3 712.3,307.3 713.3,307.3 714.3,307.2 715.3,307.2 716.3,307.2 717.3,307.2 718.3,307.2 719.3,307.2 720.3,307.2 721.3,307.2 722.3,307.2 723.3,307.2 724.3,307.2 725.3,307.1 726.3,307.1 727.3,307.1 728.3,307.1 729.3,307.1 730.3,307.1 731.3,307.1 732.3,307.1 733.3,307.1 734.3,307.1 735.3,307.1 736.3,307.1 737.3,307 738.3,307 739.3,307 740.3,307 741.3,307 742.3,307 743.3,307 744.3,307 745.3,307 746.3,307 747.3,307 748.3,307 749.3,307 750.3,307 751.3,307 752.3,307 753.3,307 754.3,307 755.3,307 756.3,307 757.3,307 758.3,307 759.3,307 760.3,307 761.3,307 762.3,307 763.3,307 764.3,307 765.3,307 766.3,307 767.3,307 768.3,307 769.3,307 770.3,307 771.3,307 772.3,307 773.3,307 774.3,307 775.3,307 776.3,307.1 777.3,307.1 778.3,307.1 779.3,307.1 780.3,307.1 781.3,307.1 782.3,307.1 783.3,307.1 784.3,307.1 785.3,307.1 786.3,307.1 787.3,307.1 788.3,307.1 789.3,307.1 790.3,307.1 791.3,307.1 792.3,307.1 793.3,307.1 794.3,307.1 795.3,307.1 796.3,307.1 797.3,307.1 798.3,307.1 799.3,307.2 800.3,307.2 801.3,307.2 802.3,307.2 803.3,307.2 804.3,307.2 805.3,307.2 806.3,307.2 807.3,307.2 808.3,307.2 809.3,307.2 810.3,307.2 811.3,307.2 812.3,307.2 813.3,307.2 814.3,307.2 815.3,307.2 816.3,307.2 817.3,307.2 818.3,307.2 819.3,307.2 820.3,307.2 821.3,307.1 822.3,307.1 823.3,307.1 824.3,307.1" fill="none" stroke="#d8d0d0" stroke-width="2.6" stroke-linejoin="round" /><polyline points="296.5,305.9 355.6,305.9 355.9,219.8 356.3,228.9 357.3,236.5 358.3,243.4 359.3,249.7 360.3,255.5 361.3,260.8 362.3,265.5 363.3,269.9 364.3,273.8 365.3,277.4 366.3,280.7 367.3,283.6 368.3,286.3 369.3,288.7 370.3,290.9 371.3,292.9 372.3,294.6 373.3,296.2 374.3,297.6 375.3,298.8 376.3,299.9 377.3,300.9 378.3,301.8 379.3,302.5 380.3,303.2 381.3,303.7 382.3,304.2 383.3,304.6 384.3,304.9 385.3,305.1 386.3,305.3 387.3,305.5 388.3,305.6 389.3,305.6 390.3,305.7 391.3,305.6 392.3,305.6 393.3,305.5 394.3,305.4 395.3,305.3 396.3,305.2 397.3,305 398.3,304.9 399.3,304.7 400.3,304.5 401.3,304.3 402.3,304.1 403.3,303.9 404.3,303.8 405.3,303.6 406.3,303.4 407.3,303.2 408.3,303 409.3,302.9 410.3,302.7 411.3,302.5 412.3,302.4 413.3,302.3 414.3,302.2 415.3,302 416.3,301.9 417.3,301.9 418.3,301.8 419.3,301.7 420.3,301.7 421.3,301.7 422.3,301.6 423.3,301.6 424.3,301.6 425.3,301.6 426.3,301.7 427.3,301.7 428.3,301.8 429.3,301.8 430.3,301.9 431.3,302 432.3,302.1 433.3,302.2 434.3,302.3 435.3,302.5 436.3,302.6 437.3,302.7 438.3,302.9 439.3,303 440.3,303.2 441.3,303.4 442.3,303.5 443.3,303.7 444.3,303.9 445.3,304.1 446.3,304.3 447.3,304.4 448.3,304.6 449.3,304.8 450.3,305 451.3,305.2 452.3,305.4 453.3,305.5 454.3,305.7 455.3,305.9 456.3,306.1 457.3,306.2 458.3,306.4 459.3,306.5 460.3,306.7 461.3,306.8 462.3,307 463.3,307.1 464.3,307.2 465.3,307.4 466.3,307.5 467.3,307.6 468.3,307.7 469.3,307.7 470.3,307.8 471.3,307.9 472.3,308 473.3,308 474.3,308.1 475.3,308.1 476.3,308.1 477.3,308.1 478.3,308.2 479.3,308.2 480.3,308.2 481.3,308.2 482.3,308.1 483.3,308.1 484.3,308.1 485.3,308 486.3,308 487.3,308 488.3,307.9 489.3,307.8 490.3,307.8 491.3,307.7 492.3,307.6 493.3,307.5 494.3,307.5 495.3,307.4 496.3,307.3 497.3,307.2 498.3,307.1 499.3,307 500.3,306.9 501.3,306.8 502.3,306.7 503.3,306.6 504.3,306.5 505.3,306.4 506.3,306.3 507.3,306.2 508.3,306.1 509.3,306 510.3,305.9 511.3,305.8 512.3,305.7 513.3,305.6 514.3,305.5 515.3,305.5 516.3,305.4 517.3,305.3 518.3,305.2 519.3,305.2 520.3,305.1 521.3,305 522.3,305 523.3,304.9 524.3,304.9 525.3,304.8 526.3,304.8 527.3,304.8 528.3,304.7 529.3,304.7 530.3,304.7 531.3,304.7 532.3,304.7 533.3,304.7 534.3,304.7 535.3,304.7 536.3,304.7 537.3,304.7 538.3,304.7 539.3,304.7 540.3,304.7 541.3,304.7 542.3,304.8 543.3,304.8 544.3,304.8 545.3,304.9 546.3,304.9 547.3,305 548.3,305 549.3,305 550.3,305.1 551.3,305.1 552.3,305.2 553.3,305.2 554.3,305.3 555.3,305.4 556.3,305.4 557.3,305.5 558.3,305.5 559.3,305.6 560.3,305.6 561.3,305.7 562.3,305.7 563.3,305.8 564.3,305.8 565.3,305.9 566.3,306 567.3,306 568.3,306 569.3,306.1 570.3,306.1 571.3,306.2 572.3,306.2 573.3,306.3 574.3,306.3 575.3,306.3 576.3,306.4 577.3,306.4 578.3,306.4 579.3,306.5 580.3,306.5 581.3,306.5 582.3,306.5 583.3,306.5 584.3,306.6 585.3,306.6 586.3,306.6 587.3,306.6 588.3,306.6 589.3,306.6 590.3,306.6 591.3,306.6 592.3,306.6 593.3,306.6 594.3,306.6 595.3,306.5 596.3,306.5 597.3,306.5 598.3,306.5 599.3,306.5 600.3,306.5 601.3,306.4 602.3,306.4 603.3,306.4 604.3,306.4 605.3,306.3 606.3,306.3 607.3,306.3 608.3,306.3 609.3,306.2 610.3,306.2 611.3,306.2 612.3,306.1 613.3,306.1 614.3,306.1 615.3,306 616.3,306 617.3,306 618.3,306 619.3,305.9 620.3,305.9 621.3,305.9 622.3,305.8 623.3,305.8 624.3,305.8 625.3,305.8 626.3,305.7 627.3,305.7 628.3,305.7 629.3,305.7 630.3,305.7 631.3,305.6 632.3,305.6 633.3,305.6 634.3,305.6 635.3,305.6 636.3,305.6 637.3,305.6 638.3,305.5 639.3,305.5 640.3,305.5 641.3,305.5 642.3,305.5 643.3,305.5 644.3,305.5 645.3,305.5 646.3,305.5 647.3,305.5 648.3,305.5 649.3,305.5 650.3,305.5 651.3,305.6 652.3,305.6 653.3,305.6 654.3,305.6 655.3,305.6 656.3,305.6 657.3,305.6 658.3,305.6 659.3,305.6 660.3,305.7 661.3,305.7 662.3,305.7 663.3,305.7 664.3,305.7 665.3,305.7 666.3,305.8 667.3,305.8 668.3,305.8 669.3,305.8 670.3,305.8 671.3,305.8 672.3,305.9 673.3,305.9 674.3,305.9 675.3,305.9 676.3,305.9 677.3,305.9 678.3,305.9 679.3,306 680.3,306 681.3,306 682.3,306 683.3,306 684.3,306 685.3,306 686.3,306 687.3,306.1 688.3,306.1 689.3,306.1 690.3,306.1 691.3,306.1 692.3,306.1 693.3,306.1 694.3,306.1 695.3,306.1 696.3,306.1 697.3,306.1 698.3,306.1 699.3,306.1 700.3,306.1 701.3,306.1 702.3,306.1 703.3,306.1 704.3,306.1 705.3,306.1 706.3,306.1 707.3,306.1 708.3,306.1 709.3,306.1 710.3,306.1 711.3,306.1 712.3,306.1 713.3,306.1 714.3,306 715.3,306 716.3,306 717.3,306 718.3,306 719.3,306 720.3,306 721.3,306 722.3,306 723.3,306 724.3,306 725.3,305.9 726.3,305.9 727.3,305.9 728.3,305.9 729.3,305.9 730.3,305.9 731.3,305.9 732.3,305.9 733.3,305.9 734.3,305.9 735.3,305.9 736.3,305.9 737.3,305.8 738.3,305.8 739.3,305.8 740.3,305.8 741.3,305.8 742.3,305.8 743.3,305.8 744.3,305.8 745.3,305.8 746.3,305.8 747.3,305.8 748.3,305.8 749.3,305.8 750.3,305.8 751.3,305.8 752.3,305.8 753.3,305.8 754.3,305.8 755.3,305.8 756.3,305.8 757.3,305.8 758.3,305.8 759.3,305.8 760.3,305.8 761.3,305.8 762.3,305.8 763.3,305.8 764.3,305.8 765.3,305.8 766.3,305.8 767.3,305.8 768.3,305.8 769.3,305.8 770.3,305.8 771.3,305.8 772.3,305.8 773.3,305.8 774.3,305.8 775.3,305.8 776.3,305.9 777.3,305.9 778.3,305.9 779.3,305.9 780.3,305.9 781.3,305.9 782.3,305.9 783.3,305.9 784.3,305.9 785.3,305.9 786.3,305.9 787.3,305.9 788.3,305.9 789.3,305.9 790.3,305.9 791.3,305.9 792.3,305.9 793.3,305.9 794.3,305.9 795.3,305.9 796.3,305.9 797.3,305.9 798.3,305.9 799.3,306 800.3,306 801.3,306 802.3,306 803.3,306 804.3,306 805.3,306 806.3,306 807.3,306 808.3,306 809.3,306 810.3,306 811.3,306 812.3,306 813.3,306 814.3,306 815.3,306 816.3,306 817.3,306 818.3,306 819.3,306 820.3,306 821.3,305.9 822.3,305.9 823.3,305.9 824.3,305.9" fill="none" stroke="#f26464" stroke-width="2.0" stroke-linejoin="round" /><rect x="296.5" y="207.5" width="528.0" height="123.0" fill="none" stroke="#6a6a6a" stroke-width="1"/><text x="289" y="211.9" font-size="9" fill="#444" text-anchor="end">4000</text><text x="289" y="235.5" font-size="9" fill="#444" text-anchor="end">3000</text><text x="289" y="260.1" font-size="9" fill="#444" text-anchor="end">2000</text><text x="289" y="284.7" font-size="9" fill="#444" text-anchor="end">1000</text><text x="289" y="309.3" font-size="9" fill="#444" text-anchor="end">0</text><text x="289" y="333.9" font-size="9" fill="#444" text-anchor="end">-1000</text><g transform="translate(352.3,345.5) rotate(20)" font-size="9.2" fill="#666"><text x="0" y="0" textLength="28" lengthAdjust="spacingAndGlyphs">0.0000</text></g><g transform="translate(431,345.5) rotate(20)" font-size="9.2" fill="#666"><text x="0" y="0" textLength="28" lengthAdjust="spacingAndGlyphs">0.0005</text></g><g transform="translate(509.7,345.5) rotate(20)" font-size="9.2" fill="#666"><text x="0" y="0" textLength="28" lengthAdjust="spacingAndGlyphs">0.0010</text></g><g transform="translate(588.4,345.5) rotate(20)" font-size="9.2" fill="#666"><text x="0" y="0" textLength="28" lengthAdjust="spacingAndGlyphs">0.0015</text></g><g transform="translate(667.1,345.5) rotate(20)" font-size="9.2" fill="#666"><text x="0" y="0" textLength="28" lengthAdjust="spacingAndGlyphs">0.0020</text></g><g transform="translate(745.8,345.5) rotate(20)" font-size="9.2" fill="#666"><text x="0" y="0" textLength="28" lengthAdjust="spacingAndGlyphs">0.0025</text></g>
<circle cx="785.7" cy="447.5" r="23.3" fill="none" stroke="#e2062c" stroke-width="3.2"/>
<line x1="773.6" y1="424.2" x2="745" y2="369" stroke="#e2062c" stroke-width="3.2"/>
<path d="M735.7 351.3 L754.1 366.4 L745.3 368.6 L737.8 374.7 Z" fill="#e2062c"/>
</svg>
</body></html>
